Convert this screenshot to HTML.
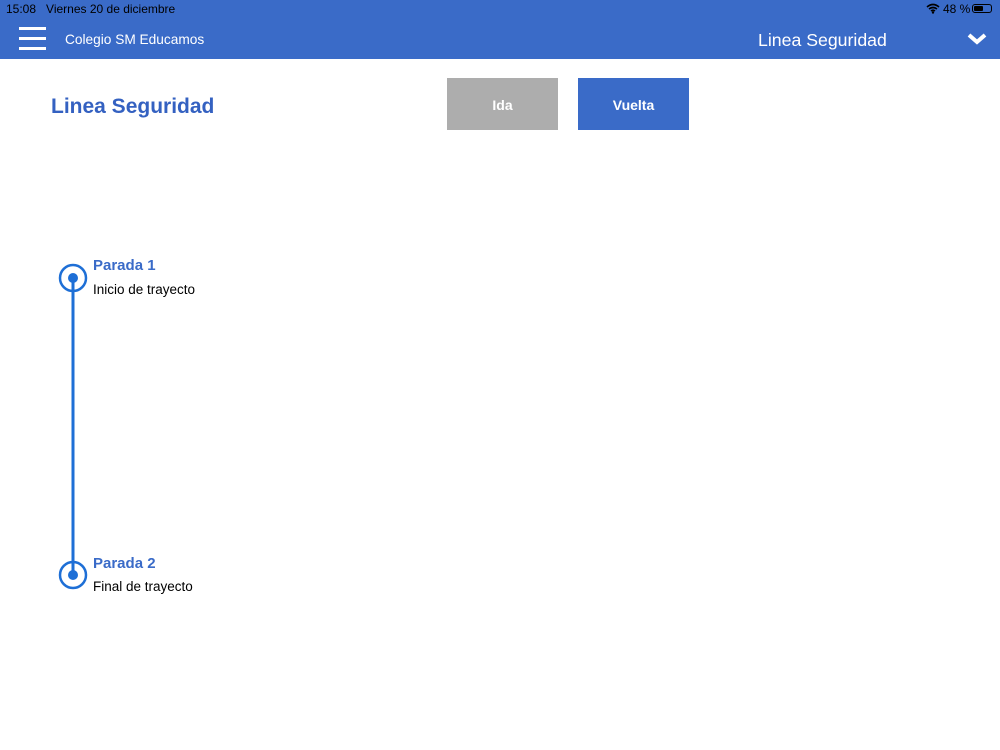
<!DOCTYPE html>
<html><head><meta charset="utf-8"><style>
body{margin:0;width:1000px;height:750px;background:#fff;font-family:"Liberation Sans",sans-serif;position:relative;overflow:hidden}
.bar{position:absolute;left:0;top:0;width:1000px;height:59px;background:#3a6bc8;color:#fff}
.t{position:absolute;white-space:nowrap}
</style></head><body>
<div class="bar">
<div class="t" style="left:6px;top:2px;font-size:12px;color:#000">15:08&nbsp;&nbsp; Viernes 20 de diciembre</div>
<div class="t" style="left:943px;top:2px;font-size:12px;color:#000">48 %</div>
<svg style="position:absolute;left:926px;top:3px" width="14" height="11" viewBox="0 0 14 11"><path d="M1 4Q7 -1 13 4M3 6Q7 3 11 6M5 8Q7 6.5 9 8" stroke="#000" stroke-width="1.6" fill="none"/><circle cx="7" cy="9.5" r="1.2" fill="#000"/></svg>
<div style="position:absolute;left:972px;top:4px;width:20px;height:9px;border:1px solid #000;border-radius:3px;box-sizing:border-box"><div style="position:absolute;left:1px;top:1px;width:9px;height:5px;background:#000;border-radius:1px"></div></div>
<div style="position:absolute;left:19px;top:27px;width:27px;height:3px;background:#fff"></div>
<div style="position:absolute;left:19px;top:37px;width:27px;height:3px;background:#fff"></div>
<div style="position:absolute;left:19px;top:47px;width:27px;height:3px;background:#fff"></div>
<div class="t" style="left:65px;top:32px;font-size:13.7px">Colegio SM Educamos</div>
<div class="t" style="left:758px;top:30px;font-size:17.7px">Linea Seguridad</div>
<svg style="position:absolute;left:966px;top:32px" width="22" height="14" viewBox="0 0 22 14"><path d="M3 3L11 10L19 3" stroke="#fff" stroke-width="4" fill="none"/></svg>
</div>
<div class="t" style="left:51px;top:95px;font-size:21px;font-weight:bold;color:#3461c1">Linea Seguridad</div>
<div style="position:absolute;left:447px;top:78px;width:111px;height:52px;background:#adadad;color:#fff;font-weight:bold;font-size:14px;text-align:center;line-height:54px">Ida</div>
<div style="position:absolute;left:578px;top:78px;width:111px;height:52px;background:#3a6bc8;color:#fff;font-weight:bold;font-size:14px;text-align:center;line-height:54px">Vuelta</div>
<svg style="position:absolute;left:0;top:0" width="200" height="650">
<line x1="73" y1="278" x2="73" y2="575" stroke="#1e6fd6" stroke-width="3"/>
<circle cx="73" cy="278" r="13" stroke="#1e6fd6" stroke-width="2.5" fill="none"/><circle cx="73" cy="278" r="5" fill="#1e6fd6"/>
<circle cx="73" cy="575" r="13" stroke="#1e6fd6" stroke-width="2.5" fill="none"/><circle cx="73" cy="575" r="5" fill="#1e6fd6"/>
</svg>
<div class="t" style="left:93px;top:257px;font-size:15px;font-weight:bold;color:#3a6bc8">Parada 1</div>
<div class="t" style="left:93px;top:282px;font-size:13.5px;color:#000">Inicio de trayecto</div>
<div class="t" style="left:93px;top:555px;font-size:15px;font-weight:bold;color:#3a6bc8">Parada 2</div>
<div class="t" style="left:93px;top:579px;font-size:13.5px;color:#000">Final de trayecto</div>
</body></html>
